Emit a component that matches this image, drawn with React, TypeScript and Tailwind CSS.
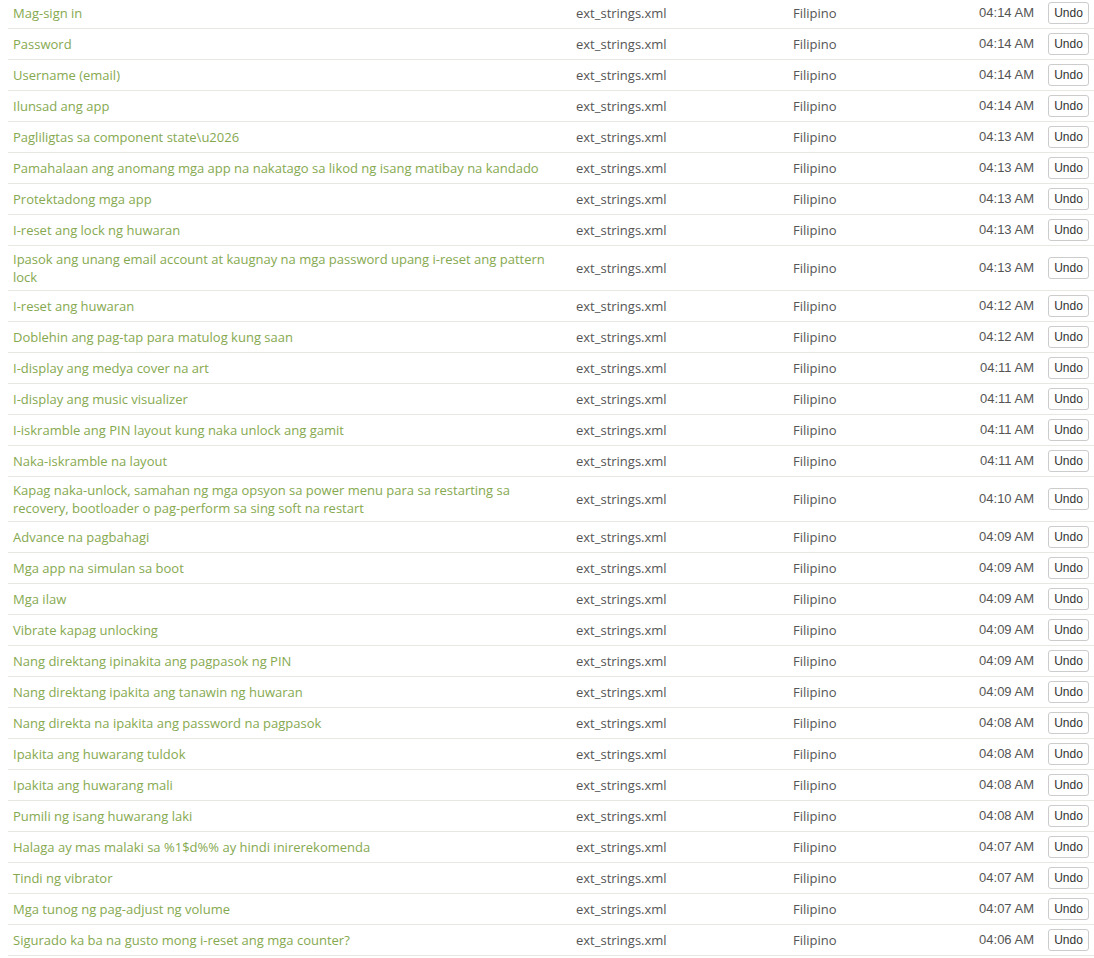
import React from "react";

const rows: [string, string][] = [
  ["Mag-sign in", "04:14 AM"],
  ["Password", "04:14 AM"],
  ["Username (email)", "04:14 AM"],
  ["Ilunsad ang app", "04:14 AM"],
  ["Pagliligtas sa component state\\u2026", "04:13 AM"],
  ["Pamahalaan ang anomang mga app na nakatago sa likod ng isang matibay na kandado", "04:13 AM"],
  ["Protektadong mga app", "04:13 AM"],
  ["I-reset ang lock ng huwaran", "04:13 AM"],
  ["Ipasok ang unang email account at kaugnay na mga password upang i-reset ang pattern lock", "04:13 AM"],
  ["I-reset ang huwaran", "04:12 AM"],
  ["Doblehin ang pag-tap para matulog kung saan", "04:12 AM"],
  ["I-display ang medya cover na art", "04:11 AM"],
  ["I-display ang music visualizer", "04:11 AM"],
  ["I-iskramble ang PIN layout kung naka unlock ang gamit", "04:11 AM"],
  ["Naka-iskramble na layout", "04:11 AM"],
  ["Kapag naka-unlock, samahan ng mga opsyon sa power menu para sa restarting sa recovery, bootloader o pag-perform sa sing soft na restart", "04:10 AM"],
  ["Advance na pagbahagi", "04:09 AM"],
  ["Mga app na simulan sa boot", "04:09 AM"],
  ["Mga ilaw", "04:09 AM"],
  ["Vibrate kapag unlocking", "04:09 AM"],
  ["Nang direktang ipinakita ang pagpasok ng PIN", "04:09 AM"],
  ["Nang direktang ipakita ang tanawin ng huwaran", "04:09 AM"],
  ["Nang direkta na ipakita ang password na pagpasok", "04:08 AM"],
  ["Ipakita ang huwarang tuldok", "04:08 AM"],
  ["Ipakita ang huwarang mali", "04:08 AM"],
  ["Pumili ng isang huwarang laki", "04:08 AM"],
  ["Halaga ay mas malaki sa %1$d%% ay hindi inirerekomenda", "04:07 AM"],
  ["Tindi ng vibrator", "04:07 AM"],
  ["Mga tunog ng pag-adjust ng volume", "04:07 AM"],
  ["Sigurado ka ba na gusto mong i-reset ang mga counter?", "04:06 AM"],
];

export default function App() {
  return (
    <div className="w-[1094px] h-[958px] overflow-hidden bg-white">
      <div className="mt-[-2px] ml-[8px] w-[1090px] font-['Open_Sans',sans-serif] text-[13px] leading-[18px]">
        {rows.map(([title, time], i) => (
          <div
            key={i}
            className="flex items-center border-b border-[#e8e7e1] py-[4px]"
          >
            <div className="w-[563px] shrink-0 px-[5px] text-[#86a950]">{title}</div>
            <div className="w-[217px] shrink-0 px-[5px] text-[#555555]">ext_strings.xml</div>
            <div className="w-[150px] shrink-0 px-[5px] text-[#555555]">Filipino</div>
            <div className="w-[105px] shrink-0 pr-[9px] text-right font-['Liberation_Sans',Arial,sans-serif] text-[#555555]">
              {time}
            </div>
            <div className="w-[55px] shrink-0 pl-[5px]">
              <button className="block h-[22px] w-[41px] rounded-[3px] border border-[#cccccc] bg-white font-['Liberation_Sans',Arial,sans-serif] text-[12px] leading-[18px] text-[#333333]">
                Undo
              </button>
            </div>
          </div>
        ))}
      </div>
    </div>
  );
}
